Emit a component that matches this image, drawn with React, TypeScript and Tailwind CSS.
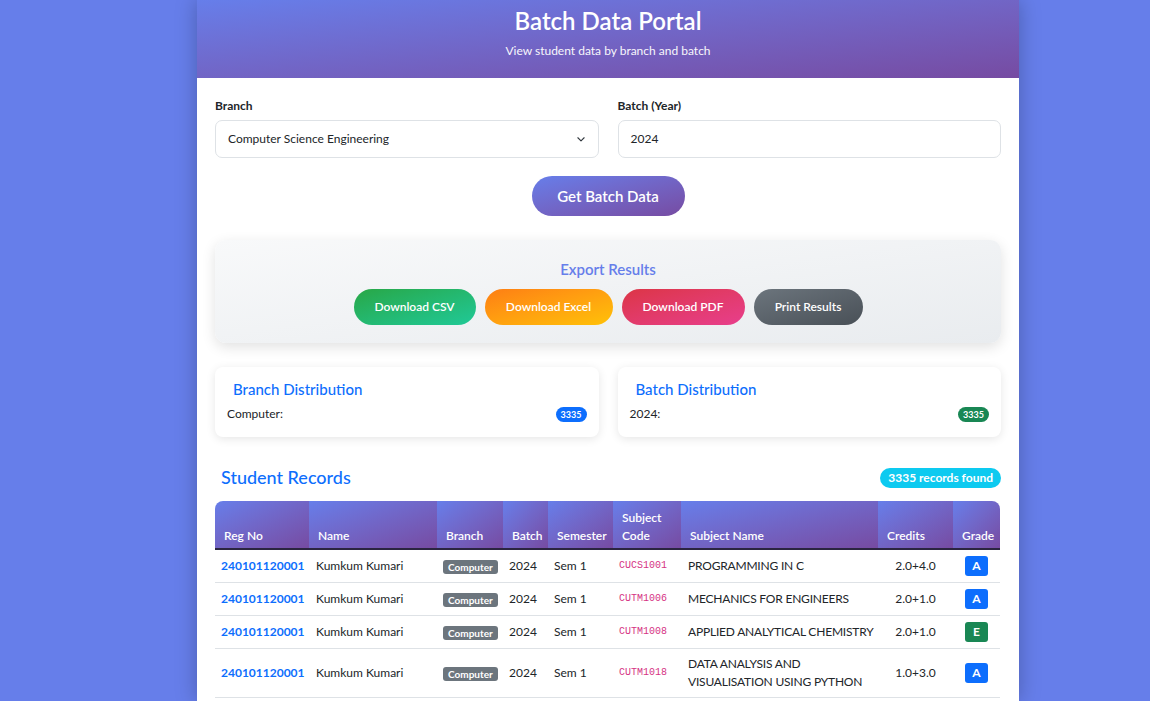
import React from "react";

const rows = [
  { reg: "240101120001", name: "Kumkum Kumari", code: "CUCS1001", subj: ["PROGRAMMING IN C"], cr: "2.0+4.0", g: "A" },
  { reg: "240101120001", name: "Kumkum Kumari", code: "CUTM1006", subj: ["MECHANICS FOR ENGINEERS"], cr: "2.0+1.0", g: "A" },
  { reg: "240101120001", name: "Kumkum Kumari", code: "CUTM1008", subj: ["APPLIED ANALYTICAL CHEMISTRY"], cr: "2.0+1.0", g: "E" },
  { reg: "240101120001", name: "Kumkum Kumari", code: "CUTM1018", subj: ["DATA ANALYSIS AND", "VISUALISATION USING PYTHON"], cr: "1.0+3.0", g: "A" },
];

const cols = [
  { h: ["Reg No"], w: 94 },
  { h: ["Name"], w: 128 },
  { h: ["Branch"], w: 66 },
  { h: ["Batch"], w: 45 },
  { h: ["Semester"], w: 65 },
  { h: ["Subject", "Code"], w: 68 },
  { h: ["Subject Name"], w: 197 },
  { h: ["Credits"], w: 75 },
  { h: ["Grade"], w: 47 },
];

export default function App() {
  return (
    <div className="min-h-[701px] bg-[#667eea] flex" style={{ fontFamily: "Lato, 'Noto Sans', sans-serif" }}>
      <div className="ml-[197px] w-[822px] min-h-[701px] bg-white shadow-[0_0_20px_rgba(0,0,0,0.25)] overflow-hidden">
        <div className="h-[78px] bg-gradient-to-br from-[#667eea] to-[#764ba2] flex flex-col items-center text-white">
          <h1 className="text-[24px] font-semibold leading-[30px] mt-[6px]">Batch Data Portal</h1>
          <p className="text-[12px] leading-[16px] mt-[7px] opacity-95">View student data by branch and batch</p>
        </div>
        <div className="px-[18px] pt-[20px] text-[#212529]">
          <div className="grid grid-cols-2 gap-[19px]">
            <div>
              <label className="block text-[12px] font-bold leading-[16px] mb-[6px]">Branch</label>
              <div className="h-[38px] border border-[#dee2e6] rounded-[7px] flex items-center justify-between px-[12px] text-[12px]">
                <span>Computer Science Engineering</span>
                <svg width="10" height="10" viewBox="0 0 16 16" fill="none" stroke="#343a40" strokeWidth="1.8" strokeLinecap="round" strokeLinejoin="round"><path d="M3 6l5 5 5-5" /></svg>
              </div>
            </div>
            <div>
              <label className="block text-[12px] font-bold leading-[16px] mb-[6px]">Batch (Year)</label>
              <div className="h-[38px] border border-[#dee2e6] rounded-[7px] flex items-center px-[12px] text-[12px]">2024</div>
            </div>
          </div>
          <div className="flex justify-center mt-[18px]">
            <button className="w-[153px] h-[40px] rounded-full bg-gradient-to-br from-[#667eea] to-[#764ba2] text-white text-[15px] font-semibold">Get Batch Data</button>
          </div>
          <div className="mt-[24px] h-[103px] rounded-[11px] bg-gradient-to-br from-[#f8f9fa] to-[#e9ecef] shadow-[0_4px_14px_rgba(0,0,0,0.12)] flex flex-col items-center pt-[20px]">
            <div className="text-[15px] font-semibold text-[#667eea] leading-[18px]">Export Results</div>
            <div className="flex gap-[9px] mt-[11px]">
              <button className="w-[122px] h-[36px] rounded-full bg-gradient-to-br from-[#28a745] to-[#20c997] text-white text-[12px] font-semibold">Download CSV</button>
              <button className="w-[128px] h-[36px] rounded-full bg-gradient-to-br from-[#fd7e14] to-[#ffc107] text-white text-[12px] font-semibold">Download Excel</button>
              <button className="w-[123px] h-[36px] rounded-full bg-gradient-to-br from-[#dc3545] to-[#e83e8c] text-white text-[12px] font-semibold">Download PDF</button>
              <button className="w-[109px] h-[36px] rounded-full bg-gradient-to-br from-[#6c757d] to-[#495057] text-white text-[12px] font-semibold">Print Results</button>
            </div>
          </div>
          <div className="grid grid-cols-2 gap-[19px] mt-[24px]">
            {[
              { t: "Branch Distribution", k: "Computer:", c: "bg-[#0d6efd]" },
              { t: "Batch Distribution", k: "2024:", c: "bg-[#198754]" },
            ].map((d) => (
              <div key={d.t} className="h-[70px] rounded-[8px] bg-white shadow-[0_2px_10px_rgba(0,0,0,0.1)] px-[12px] pt-[12px]">
                <div className="text-[15px] font-medium text-[#0d6efd] leading-[20px] pl-[6px]">{d.t}</div>
                <div className="flex justify-between items-center mt-[6px] text-[12px]">
                  <span>{d.k}</span>
                  <span className={`${d.c} text-white text-[9px] font-bold rounded-full px-[5px] leading-[15px]`}>3335</span>
                </div>
              </div>
            ))}
          </div>
          <div className="flex justify-between items-center mt-[28px] pl-[6px]">
            <h2 className="text-[18px] font-medium text-[#0d6efd] leading-[24px]">Student Records</h2>
            <span className="bg-[#0dcaf0] text-white text-[12px] font-bold rounded-full px-[8px] leading-[20px] translate-y-[1px]">3335 records found</span>
          </div>
          <table className="mt-[12px] w-[785px] table-fixed border-collapse text-[12px] leading-[18px]">
            <colgroup>
              {cols.map((c, i) => (
                <col key={i} style={{ width: c.w }} />
              ))}
            </colgroup>
            <thead>
              <tr>
                {cols.map((c, i) => (
                  <th
                    key={i}
                    className={`bg-gradient-to-br from-[#667eea] to-[#764ba2] text-white font-semibold text-left align-bottom px-[9px] pt-[6px] pb-[3px] border-b-2 border-[#2b2540] h-[48px] ${i === 0 ? "rounded-tl-[8px]" : ""} ${i === cols.length - 1 ? "rounded-tr-[8px]" : ""}`}
                  >
                    {c.h.map((l) => (
                      <div key={l}>{l}</div>
                    ))}
                  </th>
                ))}
              </tr>
            </thead>
            <tbody>
              {rows.map((r, i) => (
                <tr key={i} className="border-b border-[#dee2e6]">
                  <td className="px-[6px] py-[6px] font-bold text-[#0d6efd]">{r.reg}</td>
                  <td className="px-[7px] py-[6px]">{r.name}</td>
                  <td className="px-[6px] py-[6px]">
                    <span className="inline-block bg-[#6c757d] text-white text-[10px] font-bold rounded-[3px] px-[5px] leading-[14px] align-middle">Computer</span>
                  </td>
                  <td className="px-[6px] py-[6px]">2024</td>
                  <td className="px-[6px] py-[6px]">Sem 1</td>
                  <td className="px-[6px] py-[6px] text-[#d63384] text-[10px]" style={{ fontFamily: "'Liberation Mono', monospace" }}>{r.code}</td>
                  <td className="px-[7px] py-[6px] tracking-[-0.2px]">
                    {r.subj.map((s) => (
                      <div key={s} className="whitespace-nowrap">{s}</div>
                    ))}
                  </td>
                  <td className="px-[6px] py-[6px] text-center">{r.cr}</td>
                  <td className="px-[6px] py-[6px] text-center">
                    <span className={`inline-block ${r.g === "E" ? "bg-[#198754]" : "bg-[#0d6efd]"} text-white text-[12px] font-bold rounded-[3px] w-[23px] leading-[20px] align-middle`}>{r.g}</span>
                  </td>
                </tr>
              ))}
            </tbody>
          </table>
        </div>
      </div>
    </div>
  );
}
